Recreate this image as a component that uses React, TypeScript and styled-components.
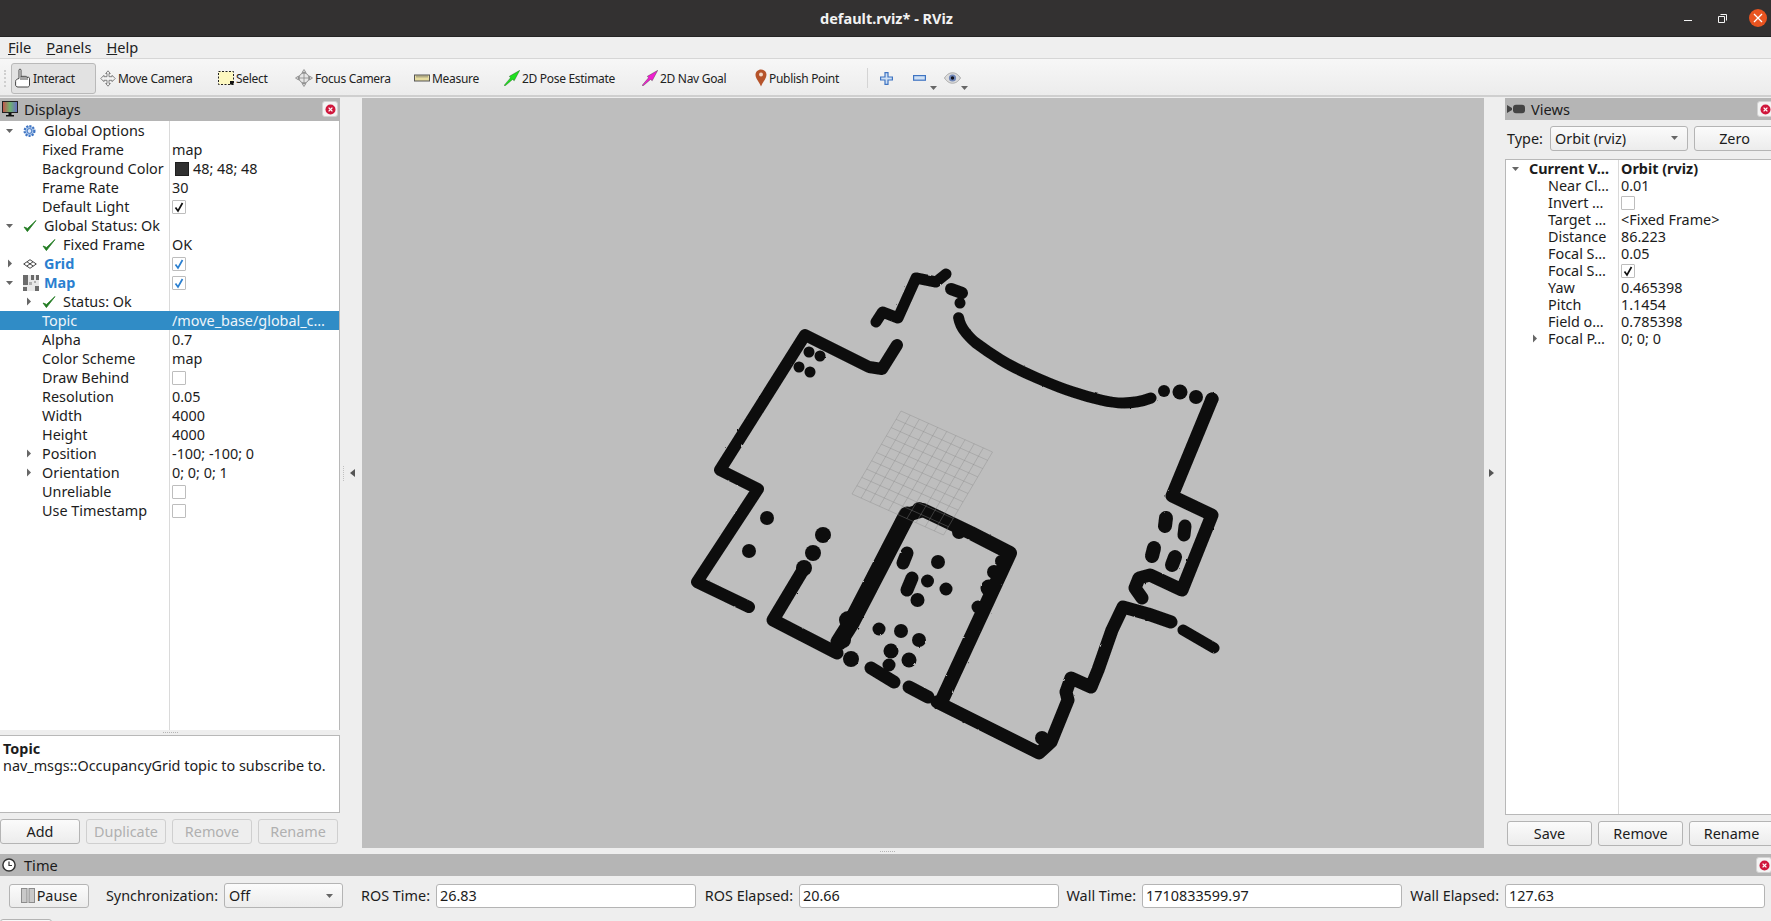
import React from "react";
import styled, { createGlobalStyle } from "styled-components";

const Global = createGlobalStyle`
  html, body { margin: 0; padding: 0; background: #eeeeee; overflow: hidden; }
  * { box-sizing: border-box; }
`;

const FONT = `"Noto Sans", "Open Sans", sans-serif`;

const Page = styled.div`
  width: 1771px; height: 921px; overflow: hidden; display: flex; flex-direction: column;
  font-family: ${FONT}; font-size: 14.4px; color: #1c1c1c; background: #eeeeee;
`;
const TitleBar = styled.div`
  flex: 0 0 37px; background: #333131; border-bottom: 1px solid #252424; position: relative;
  display: flex; align-items: center; justify-content: center; color: #f2f2f2; font-weight: 700; font-size: 14.5px; padding-left: 2px;
`;
const WindowControls = styled.div`
  position: absolute; top: 0; right: 4px; height: 36px; display: flex; align-items: center;
`;
const MenuBar = styled.div`
  flex: 0 0 22px; display: flex; gap: 15px; align-items: center; padding: 0 0 2px 8px; background: #efefef;
  border-bottom: 1px solid #d6d6d6; font-size: 14.6px; line-height: 18px; color: #222;
`;
const Toolbar = styled.div`
  flex: 0 0 38px; display: flex; align-items: center; padding: 2px 0 0 4px; font-size: 12px; letter-spacing: -.3px; color: #222;
  background: linear-gradient(#f7f7f7, #ececec); border-bottom: 2px solid #cfcfcf;
`;
const Grip = styled.div`
  width: 3px; height: 17px; margin-right: 4px; border-left: 2px dotted #cfcfcf;
`;
const ToolButton = styled.div<{ $w: number; $active?: boolean }>`
  flex: 0 0 ${p => p.$w}px; height: 31px; display: flex; align-items: center; gap: 2px; padding-left: 3px;
  border: 1px solid ${p => (p.$active ? "#b9b9b9" : "transparent")}; border-radius: 3px;
  background: ${p => (p.$active ? "#e2e2e2" : "transparent")};
`;
const ToolSep = styled.div`
  width: 1px; height: 20px; background: #d4d4d4; margin-right: 12px;
`;
const IconTool = styled.div<{ $w: number }>`
  position: relative; flex: 0 0 ${p => p.$w}px; height: 24px; display: flex; align-items: center;
`;
const Drop = styled.span`
  position: absolute; left: 17px; bottom: 0; line-height: 0;
`;
const Workspace = styled.div`
  flex: 0 0 757px; display: flex; padding-top: 1px; position: relative;
`;
const Dock = styled.div<{ $w: number }>`
  flex: 0 0 ${p => p.$w}px; display: flex; flex-direction: column; height: 100%;
`;
const DockHeader = styled.div<{ $h: number }>`
  flex: 0 0 ${p => p.$h}px; background: #b5b5b5; display: flex; align-items: center; gap: 6px; padding: 0 0 1px 2px;
  position: relative; font-size: 14.6px;
`;
const CloseBox = styled.div`
  position: absolute; right: 2px; top: 3px; width: 16px; height: 16px; background: #f4f4f4; border: 1px solid #d2d2d2; border-radius: 3px;
  display: flex; align-items: center; justify-content: center;
`;
const Tree = styled.div<{ $col: number; $h: number; $framed?: boolean }>`
  flex: 0 0 ${p => p.$h}px; border-right: 1px solid #b8b8b8; overflow: hidden;
  border-left: ${p => (p.$framed ? "1px solid #b8b8b8" : "none")};
  border-top: ${p => (p.$framed ? "1px solid #b8b8b8" : "none")};
  border-bottom: ${p => (p.$framed ? "1px solid #b8b8b8" : "none")};
  background: linear-gradient(#dadada, #dadada) ${p => p.$col}px 0 / 1px 100% no-repeat, #ffffff;
`;
const CompactRows = styled.div`
  margin-top: -1px;
`;
const Row = styled.div<{ $col: number; $h: number; $selected?: boolean }>`
  height: ${p => p.$h}px; display: grid; grid-template-columns: ${p => p.$col}px 1fr; align-items: center; white-space: nowrap;
  background: ${p => (p.$selected ? "#308cc6" : "transparent")}; color: ${p => (p.$selected ? "#eef5fa" : "inherit")};
`;
const NameCell = styled.div<{ $level: number }>`
  display: flex; align-items: center; height: 100%; padding-left: ${p => p.$level * 19}px; min-width: 0;
`;
const ArrowSlot = styled.span`
  flex: 0 0 19px; display: flex; align-items: center; justify-content: center;
`;
const IconSlot = styled.span`
  flex: 0 0 25px; display: flex; align-items: center; padding-left: 4px;
`;
const Label = styled.span<{ $bold?: boolean; $blue?: boolean; $plain?: boolean }>`
  font-weight: ${p => (p.$bold || p.$blue ? 700 : 400)};
  color: ${p => (p.$blue ? "#2a7fd0" : "inherit")};
  margin-left: ${p => (p.$plain ? 4 : 0)}px;
`;
const ValueCell = styled.div<{ $bold?: boolean }>`
  display: flex; align-items: center; gap: 4px; padding-left: 3px; height: 100%; font-weight: ${p => (p.$bold ? 700 : 400)};
  overflow: hidden;
`;
const Swatch = styled.span`
  width: 14px; height: 14px; margin-left: 3px; background: #303030; border: 1px solid #1f1f1f;
`;
const Check = styled.span`
  width: 14px; height: 14px; background: #fff; border: 1px solid #bdbdbd; border-radius: 1px; display: flex; align-items: center; justify-content: center;
`;
const SplitHandle = styled.div<{ $h: number }>`
  flex: 0 0 ${p => p.$h}px; display: flex; align-items: center; justify-content: center;
`;
const HDots = styled.span`
  width: 15px; border-top: 1px dotted #b5b5b5;
`;
const Description = styled.div`
  flex: 0 0 78px; background: #fff; border: 1px solid #b8b8b8; border-left: none; padding: 4px 3px; line-height: 17px;
`;
const DescTitle = styled.div`
  font-weight: 700;
`;
const ButtonRow = styled.div<{ $pl: number; $mt: number }>`
  display: flex; gap: 6px; padding-left: ${p => p.$pl}px; margin-top: ${p => p.$mt}px;
`;
const Button = styled.div<{ $w: number; $disabled?: boolean }>`
  flex: 0 0 ${p => p.$w}px; height: 25px; display: flex; align-items: center; justify-content: center;
  border: 1px solid ${p => (p.$disabled ? "#cfcfcf" : "#b4b4b4")}; border-radius: 3px;
  color: ${p => (p.$disabled ? "#b0b0b0" : "#1c1c1c")};
  background: ${p => (p.$disabled ? "#eeeeee" : "linear-gradient(#fbfbfb, #ececec)")};
`;
const Gutter = styled.div<{ $pl: number; $pr: number; $w: number }>`
  flex: 0 0 ${p => p.$w}px; position: relative; display: flex; align-items: center; justify-content: center;
  padding: 0 ${p => p.$pr}px 6px ${p => p.$pl}px;
`;
const VDots = styled.span`
  position: absolute; left: 3px; top: 368px; height: 15px; border-left: 1px dotted #c0c0c0;
`;
const ViewportCol = styled.div`
  flex: 0 0 1122px; display: flex; flex-direction: column; height: 100%;
`;
const Viewport = styled.div`
  flex: 0 0 750px; background: #bebebe; svg { display: block; }
`;
const BottomHandle = styled.div`
  flex: 1; display: flex; align-items: center; padding-left: 518px;
`;
const TypeRow = styled.div`
  flex: 0 0 39px; display: flex; align-items: center; padding: 0 0 3px 2px;
`;
const TypeLabel = styled.span`
  width: 43px;
`;
const Combo = styled.div<{ $w: number }>`
  flex: 0 0 ${p => p.$w}px; height: 25px; display: flex; align-items: center; justify-content: space-between; padding: 0 8px 0 4px;
  border: 1px solid #b4b4b4; border-radius: 3px; background: linear-gradient(#fbfbfb, #ececec);
`;
const ZeroButton = styled(Button)`
  margin-left: 6px;
`;
const TimeDock = styled.div`
  flex: 1; display: flex; flex-direction: column; position: relative;
`;
const TimeHeader = styled.div`
  flex: 0 0 22px; background: #b5b5b5; display: flex; align-items: center; gap: 8px; padding-left: 2px; position: relative; font-size: 14.6px;
`;
const TimeClose = styled(CloseBox)`
  right: -1px; top: 3px;
`;
const TimeBar = styled.div`
  display: grid; align-items: center; padding: 7px 0 0 9px; height: 31px;
  grid-template-columns: 80px 135px 119px 93px 260px 103px 260px 83px 260px 103px 260px;
`;
const TimeLabel = styled.span`
  text-align: right; padding-right: 6px; white-space: nowrap;
`;
const TimeInput = styled.div`
  height: 24px; border: 1px solid #b4b4b4; border-radius: 3px; background: #fff; display: flex; align-items: center; padding-left: 3px;
`;
const PauseButton = styled(Button)`
  gap: 2px; height: 24px;
`;
const ResetStub = styled.div`
  width: 52px; height: 10px; margin-top: 12px; border: 1px solid #b4b4b4; border-radius: 3px; background: #f8f8f8;
`;

/* ---------- icons ---------- */
const ArrowDown = () => (
  <svg width="9" height="6" viewBox="0 0 9 6"><path d="M1 1h7L4.500 5z" fill="#666" /></svg>
);
const ArrowRight = () => (
  <svg width="6" height="9" viewBox="0 0 6 9"><path d="M1 .5v8L5 4.500z" fill="#666" /></svg>
);
const CloseIcon = () => (
  <svg width="11" height="11" viewBox="0 0 11 11">
    <circle cx="5.500" cy="5.500" r="5" fill="#d0173c" />
    <path d="M3.600 3.600l3.800 3.800M7.400 3.600L3.600 7.400" stroke="#fff" strokeWidth="1.300" />
  </svg>
);
const CheckMark = ({ blue }: { blue?: boolean }) => (
  <svg width="12" height="12" viewBox="0 0 12 12"><path d="M2.500 6.500L5 10l4.500-8" fill="none" stroke={blue ? "#2a7fd0" : "#111"} strokeWidth="1.700" /></svg>
);
const GreenCheck = () => (
  <svg width="14" height="14" viewBox="0 0 14 14"><path d="M1 8l3.400 4.600L13 1.500 4.600 9.400z" fill="#1f7a1f" stroke="#1f7a1f" strokeWidth=".8" /></svg>
);
const GearIcon = () => (
  <svg width="13" height="14" viewBox="0 0 13 14">
    <circle cx="6.500" cy="7" r="4.900" fill="#aac6ea" stroke="#3f74c2" strokeWidth="2.200" strokeDasharray="2 1.200" />
    <circle cx="6.500" cy="7" r="2.400" fill="#dfeafa" stroke="#3f74c2" />
  </svg>
);
const GridIcon = () => (
  <svg width="14" height="10" viewBox="0 0 14 10">
    <path d="M7 .7L13.300 5 7 9.300.7 5zM4 2.800l6.200 4.300M10 2.800L3.800 7.100" fill="none" stroke="#444" strokeWidth="1" />
  </svg>
);
const MapIcon = () => (
  <svg width="16" height="16" viewBox="0 0 16 16">
    <rect width="16" height="16" fill="#e8e8e8" />
    <path d="M0 0h5v10H0zM8 0h3v5H8zM13 0h3v5h-3zM0 12h4v4H0zM12 11h4v5h-4z" fill="#6b6b6b" />
    <path d="M6 7h3v3H6zM11 6h2v2h-2z" fill="#b0b0b0" />
  </svg>
);
const MonitorIcon = () => (
  <svg width="16" height="16" viewBox="0 0 16 16">
    <defs>
      <linearGradient id="scr" x1="0" x2="1"><stop offset="0" stopColor="#c8504a" /><stop offset=".5" stopColor="#6fb36f" /><stop offset="1" stopColor="#6a6ac8" /></linearGradient>
    </defs>
    <rect x=".5" y=".5" width="15" height="11" fill="url(#scr)" stroke="#222" />
    <path d="M6.500 12h3v2h-3zM4 14h8v1.400H4z" fill="#111" />
  </svg>
);
const CameraIcon = () => (
  <svg width="18" height="10" viewBox="0 0 18 10">
    <path d="M0 1l5 3V6l-5 3z" fill="#444" />
    <rect x="6" y=".8" width="12" height="8.400" rx="3" fill="#444" />
  </svg>
);
const ClockIcon = () => (
  <svg width="14" height="14" viewBox="0 0 14 14">
    <circle cx="7" cy="7" r="6.100" fill="#fff" stroke="#333" strokeWidth="1.500" />
    <path d="M7 3.500V7.500H10" fill="none" stroke="#333" strokeWidth="1.200" />
  </svg>
);
const HandIcon = () => (
  <svg width="16" height="20" viewBox="0 0 16 20">
    <path d="M4 10.500V2.200c0-1.500 2-1.500 2 0V9c0-1.200 2-1.200 2 0 0-1.200 2-1.200 2 0 0-1 2-1 2 .3v.6c0-1 2.500-1 2.500.4V17c0 1-.6 2-2 2H3c-1.400 0-2.400-1-2.400-2v-3.600c0-1.600 1.400-2.400 3.400-2.900zM6 9v3M8 9v3M10 9v3M12 9.500V12" fill="#fff" stroke="#333" strokeWidth=".9" />
  </svg>
);
const MoveIcon = () => (
  <svg width="16" height="17" viewBox="0 0 16 17">
    <path d="M8 .8l2.300 2.700H9v3.200h3.100V5.300L15.200 8.500l-3.100 3.200V10.300H9v3.200h1.300L8 16.200l-2.300-2.700H7v-3.200H3.900v1.400L.8 8.500l3.100-3.200v1.400H7V3.500H5.700z" fill="#f2f2f2" stroke="#777" strokeWidth=".9" />
  </svg>
);
const SelectIcon = () => (
  <svg width="16" height="14" viewBox="0 0 16 14">
    <rect x=".5" y=".5" width="15" height="13" fill="#fdf8c0" stroke="#222" strokeDasharray="2 1.500" />
    <path d="M12 10h3.500v3.500H12z" fill="#111" />
  </svg>
);
const FocusIcon = () => (
  <svg width="18" height="18" viewBox="0 0 18 18">
    <circle cx="9" cy="9" r="5" fill="#e6e6e6" stroke="#888" />
    <path d="M9 .5l2 3H7zM9 17.500l2-3H7zM.5 9l3-2v4zM17.500 9l-3-2v4zM9 3v12M3 9h12" fill="#cfcfcf" stroke="#888" strokeWidth=".8" />
  </svg>
);
const RulerIcon = () => (
  <svg width="16" height="8" viewBox="0 0 16 8">
    <rect x=".5" y="1" width="15" height="6" fill="#e6dca0" stroke="#555" />
    <path d="M3 1.500v2M5 1.500v2M7 1.500v2M9 1.500v2M11 1.500v2M13 1.500v2" stroke="#555" strokeWidth=".7" />
  </svg>
);
const ArrowGoal = ({ color }: { color: string }) => (
  <svg width="16" height="16" viewBox="0 0 16 16">
    <path d="M0 15.400L6.500 7.800 5.300 6.300 15.800 .3l-5.600 10.500-1.600-1.400-7.400 6.400z" fill={color} stroke="#1a3a1a" strokeWidth=".35" />
  </svg>
);
const PinIcon = () => (
  <svg width="12" height="18" viewBox="0 0 12 18">
    <path d="M6 .5c3 0 5.500 2.300 5.500 5.300 0 3.700-3.700 7.200-5.500 11.700C4.200 13 .5 9.500.5 5.800.5 2.800 3 .5 6 .5z" fill="#b5532a" />
    <circle cx="6" cy="5.500" r="2" fill="#f2d9c8" />
  </svg>
);
const PlusIcon = () => (
  <svg width="13" height="13" viewBox="0 0 13 13">
    <path d="M5 .6h3V5h4.400v3H8v4.400H5V8H.6V5H5z" fill="#cfe0f4" stroke="#3f74c2" strokeWidth="1.200" />
  </svg>
);
const MinusIcon = () => (
  <svg width="13" height="6" viewBox="0 0 13 6">
    <rect x=".6" y=".6" width="11.800" height="4.600" fill="#cfe0f4" stroke="#3f74c2" strokeWidth="1.200" />
  </svg>
);
const EyeIcon = () => (
  <svg width="17" height="12" viewBox="0 0 17 12">
    <path d="M.5 6C3 2 6 .8 8.500.8S14 2 16.500 6c-2.500 4-5.500 5.200-8 5.200S3 10 .5 6z" fill="#dcdcdc" stroke="#a8a8a8" />
    <circle cx="8.500" cy="6" r="3.600" fill="#6f86b8" />
    <circle cx="8.500" cy="6" r="1.700" fill="#14141e" />
  </svg>
);
const TinyDrop = () => (
  <svg width="7" height="4" viewBox="0 0 7 4"><path d="M0 0h7L3.500 4z" fill="#666" /></svg>
);
const SideArrow = ({ dir }: { dir: "l" | "r" }) => (
  <svg width="5" height="8" viewBox="0 0 5 8"><path d={dir === "l" ? "M5 0v8L0 4z" : "M0 0v8l5-4z"} fill="#555" /></svg>
);
const PauseIcon = () => (
  <svg width="14" height="15" viewBox="0 0 14 15">
    <rect x=".5" y=".5" width="5.500" height="14" fill="#c9c9c9" stroke="#8c8c8c" />
    <rect x="8" y=".5" width="5.500" height="14" fill="#c9c9c9" stroke="#8c8c8c" />
  </svg>
);
const WinMin = styled.div`
  width: 8px; height: 1px; background: #f4f4f4; margin: 4px 26px 0 0;
`;
const WinClose = styled.div`
  width: 18px; height: 18px; border-radius: 50%; background: #e95420; display: flex; align-items: center; justify-content: center; margin-left: 22px;
`;

/* ---------- data ---------- */
type RowData = {
  name: string; level?: number; arrow?: "d" | "r"; icon?: React.ReactNode; blue?: boolean; bold?: boolean;
  value?: string; swatch?: boolean; check?: boolean | "blue"; unchecked?: boolean; selected?: boolean;
};
const displays: RowData[] = [
  { name: "Global Options", arrow: "d", icon: <GearIcon /> },
  { name: "Fixed Frame", level: 1, value: "map" },
  { name: "Background Color", level: 1, value: "48; 48; 48", swatch: true },
  { name: "Frame Rate", level: 1, value: "30" },
  { name: "Default Light", level: 1, check: true },
  { name: "Global Status: Ok", arrow: "d", icon: <GreenCheck /> },
  { name: "Fixed Frame", level: 1, icon: <GreenCheck />, value: "OK" },
  { name: "Grid", arrow: "r", icon: <GridIcon />, blue: true, check: "blue" },
  { name: "Map", arrow: "d", icon: <MapIcon />, blue: true, check: "blue" },
  { name: "Status: Ok", level: 1, arrow: "r", icon: <GreenCheck /> },
  { name: "Topic", level: 1, value: "/move_base/global_c…", selected: true },
  { name: "Alpha", level: 1, value: "0.7" },
  { name: "Color Scheme", level: 1, value: "map" },
  { name: "Draw Behind", level: 1, unchecked: true },
  { name: "Resolution", level: 1, value: "0.05" },
  { name: "Width", level: 1, value: "4000" },
  { name: "Height", level: 1, value: "4000" },
  { name: "Position", level: 1, arrow: "r", value: "-100; -100; 0" },
  { name: "Orientation", level: 1, arrow: "r", value: "0; 0; 0; 1" },
  { name: "Unreliable", level: 1, unchecked: true },
  { name: "Use Timestamp", level: 1, unchecked: true },
];
const views: RowData[] = [
  { name: "Current V…", arrow: "d", bold: true, value: "Orbit (rviz)" },
  { name: "Near Cl…", level: 1, value: "0.01" },
  { name: "Invert …", level: 1, unchecked: true },
  { name: "Target …", level: 1, value: "<Fixed Frame>" },
  { name: "Distance", level: 1, value: "86.223" },
  { name: "Focal S…", level: 1, value: "0.05" },
  { name: "Focal S…", level: 1, check: true },
  { name: "Yaw", level: 1, value: "0.465398" },
  { name: "Pitch", level: 1, value: "1.1454" },
  { name: "Field o…", level: 1, value: "0.785398" },
  { name: "Focal P…", level: 1, arrow: "r", value: "0; 0; 0" },
];

const TreeRows = ({ rows, col, h }: { rows: RowData[]; col: number; h: number }) => (
  <>
    {rows.map((r, i) => (
      <Row key={i} $col={col} $h={h} $selected={r.selected}>
        <NameCell $level={r.level ?? 0}>
          <ArrowSlot>{r.arrow === "d" ? <ArrowDown /> : r.arrow === "r" ? <ArrowRight /> : null}</ArrowSlot>
          {r.icon && <IconSlot>{r.icon}</IconSlot>}
          <Label $bold={r.bold} $blue={r.blue} $plain={!r.icon}>{r.name}</Label>
        </NameCell>
        <ValueCell $bold={r.bold}>
          {r.swatch && <Swatch />}
          {r.check && <Check><CheckMark blue={r.check === "blue"} /></Check>}
          {r.unchecked && <Check />}
          {r.value}
        </ValueCell>
      </Row>
    ))}
  </>
);

/* ---------- map drawing ---------- */
const walls: { w: number; pts: string }[] = [
  { w: 12, pts: "897,345 882,369 869,367 805,335 720,470 758,489 697,582 749,607" },
  { w: 11, pts: "876,322 882.500,312 898,318 916,278 936,282 946,274" },
  { w: 12, pts: "951,289 962,293" },
  { w: 13, pts: "1212,399 1172,496 1212,515 1182,590 1150,575 1139,578 1135,588 1142,598" },
  { w: 13, pts: "1171,622 1148,614 1123,607 1112,630 1098,670 1091,687 1071,678 1066,692 1068,700 1051,742 1039,753 937,702" },
  { w: 11, pts: "1183,630 1214,648" },
  { w: 14, pts: "942,700 1010,553 971,533 923,510 907,515" },
  { w: 17, pts: "907,515 851,623 839,642" },
  { w: 13, pts: "803,570 773,620 837,653" },
  { w: 13, pts: "871,668 894,682" },
  { w: 13, pts: "909,687 928,697" },
  { w: 13, pts: "907,553 903,563" },
  { w: 13, pts: "912,578 907,590" },
  { w: 14, pts: "1166,518 1165,526" },
  { w: 13, pts: "1185,526 1184,535" },
  { w: 14, pts: "1154,548 1152,556" },
  { w: 14, pts: "1175,557 1172,565" },
];
const CURVE = "M958.600 317.700Q960 326 966 333T976 343Q988 352 1001 360T1037 378T1073 392Q1088 397 1101 400T1123 403Q1138 403 1151 398";
const dots: [number, number, number][] = [
  [960, 303, 5.5], [1164, 391, 6], [1180, 392, 7.5], [1196, 397, 7], [1212, 399, 6.5],
  [809, 352, 5.5], [820, 356, 5.5], [799, 367, 5.5], [810, 372, 5.5],
  [851, 659, 8], [889, 665, 6.5], [823, 535, 8], [813, 553, 8], [804, 568, 8], [767, 518, 7], [749, 551, 7],
  [938, 562, 7], [927.5, 581, 6.5], [946, 589, 6.5], [917.5, 600, 7], [879, 629, 6.5], [901, 631, 7], [919, 640, 7],
  [891, 651, 7.5], [909, 660, 7.5], [1001, 561, 6], [994, 572, 7], [989, 588, 8.5], [978, 607, 6.5], [959, 532, 7], [843, 640, 8], [848, 620, 9],
  [1042, 738, 7], [919, 509, 7],
];
const gridLines = (() => {
  const t = [901, 411], r = [992.5, 452], l = [852, 494];
  const out: string[] = [];
  for (let i = 0; i <= 10; i++) {
    const f = i / 10;
    const ux = (r[0] - t[0]) * f, uy = (r[1] - t[1]) * f;
    const vx = (l[0] - t[0]) * f, vy = (l[1] - t[1]) * f;
    out.push(`M${t[0] + ux} ${t[1] + uy}L${l[0] + ux} ${l[1] + uy}`);
    out.push(`M${t[0] + vx} ${t[1] + vy}L${r[0] + vx} ${r[1] + vy}`);
  }
  return out.join("");
})();
const MapDrawing = () => (
  <svg width="1122" height="750" viewBox="362 98 1122 750">
    <defs>
      <filter id="rough" filterUnits="userSpaceOnUse" x="362" y="98" width="1122" height="750">
        <feTurbulence type="fractalNoise" baseFrequency="0.18" numOctaves="2" seed="4" result="n" />
        <feDisplacementMap in="SourceGraphic" in2="n" scale="1.8" />
      </filter>
    </defs>
    <g filter="url(#rough)">
      <g fill="none" stroke="#0f0f0f" strokeLinecap="round" strokeLinejoin="round">
        {walls.map((w, i) => <polyline key={i} points={w.pts} strokeWidth={w.w} />)}
        <path d={CURVE} strokeWidth="11" />
      </g>
      {dots.map(([x, y, r], i) => <circle key={i} cx={x} cy={y} r={r} fill="#0f0f0f" />)}
    </g>
    <path d={gridLines} fill="none" stroke="#8a8a8a" strokeOpacity=".38" strokeWidth="1" />
  </svg>
);

export default function App() {
  return (
    <Page>
      <Global />
      <TitleBar>
        default.rviz* - RViz
        <WindowControls>
          <WinMin />
          <svg width="9" height="9" viewBox="0 0 9 9"><path d="M2.500.5h6v6M.5 2.500h6v6h-6z" fill="none" stroke="#f4f4f4" /></svg>
          <WinClose>
            <svg width="10" height="10" viewBox="0 0 10 10"><path d="M1 1l8 8M9 1L1 9" stroke="#fff" strokeWidth="1.300" /></svg>
          </WinClose>
        </WindowControls>
      </TitleBar>
      <MenuBar>
        <span><u>F</u>ile</span>
        <span><u>P</u>anels</span>
        <span><u>H</u>elp</span>
      </MenuBar>
      <Toolbar>
        <Grip />
        <ToolButton $w={85} $active><HandIcon />Interact</ToolButton>
        <ToolButton $w={118}><MoveIcon />Move Camera</ToolButton>
        <ToolButton $w={77}><SelectIcon />Select</ToolButton>
        <ToolButton $w={119}><FocusIcon />Focus Camera</ToolButton>
        <ToolButton $w={90}><RulerIcon />Measure</ToolButton>
        <ToolButton $w={138}><ArrowGoal color="#1fe01f" />2D Pose Estimate</ToolButton>
        <ToolButton $w={113}><ArrowGoal color="#f01fd0" />2D Nav Goal</ToolButton>
        <ToolButton $w={116}><PinIcon />Publish Point</ToolButton>
        <ToolSep />
        <IconTool $w={33}><PlusIcon /></IconTool>
        <IconTool $w={31}><MinusIcon /><Drop><TinyDrop /></Drop></IconTool>
        <IconTool $w={30}><EyeIcon /><Drop><TinyDrop /></Drop></IconTool>
      </Toolbar>
      <Workspace>
        <Dock $w={340}>
          <DockHeader $h={23}>
            <MonitorIcon />Displays
            <CloseBox><CloseIcon /></CloseBox>
          </DockHeader>
          <Tree $col={169} $h={609}>
            <TreeRows rows={displays} col={169} h={19} />
          </Tree>
          <SplitHandle $h={5}><HDots /></SplitHandle>
          <Description>
            <DescTitle>Topic</DescTitle>
            nav_msgs::OccupancyGrid topic to subscribe to.
          </Description>
          <ButtonRow $pl={0} $mt={6}>
            <Button $w={80}>Add</Button>
            <Button $w={80} $disabled>Duplicate</Button>
            <Button $w={80} $disabled>Remove</Button>
            <Button $w={80} $disabled>Rename</Button>
          </ButtonRow>
        </Dock>
        <Gutter $w={22} $pl={3} $pr={0}><VDots /><SideArrow dir="l" /></Gutter>
        <ViewportCol>
          <Viewport><MapDrawing /></Viewport>
          <BottomHandle><HDots /></BottomHandle>
        </ViewportCol>
        <Gutter $w={21} $pl={0} $pr={6}><SideArrow dir="r" /></Gutter>
        <Dock $w={270}>
          <DockHeader $h={22}>
            <CameraIcon />Views
            <CloseBox><CloseIcon /></CloseBox>
          </DockHeader>
          <TypeRow>
            <TypeLabel>Type:</TypeLabel>
            <Combo $w={138}>Orbit (rviz)<ArrowDown /></Combo>
            <ZeroButton $w={81}>Zero</ZeroButton>
          </TypeRow>
          <Tree $col={112} $h={656} $framed>
            <CompactRows>
              <TreeRows rows={views} col={112} h={17} />
            </CompactRows>
          </Tree>
          <ButtonRow $pl={2} $mt={6}>
            <Button $w={85}>Save</Button>
            <Button $w={85}>Remove</Button>
            <Button $w={85}>Rename</Button>
          </ButtonRow>
        </Dock>
      </Workspace>
      <TimeDock>
        <TimeHeader>
          <ClockIcon />Time
          <TimeClose><CloseIcon /></TimeClose>
        </TimeHeader>
        <TimeBar>
          <PauseButton $w={80}><PauseIcon />Pause</PauseButton>
          <TimeLabel>Synchronization:</TimeLabel>
          <Combo $w={119}>Off<ArrowDown /></Combo>
          <TimeLabel>ROS Time:</TimeLabel>
          <TimeInput>26.83</TimeInput>
          <TimeLabel>ROS Elapsed:</TimeLabel>
          <TimeInput>20.66</TimeInput>
          <TimeLabel>Wall Time:</TimeLabel>
          <TimeInput>1710833599.97</TimeInput>
          <TimeLabel>Wall Elapsed:</TimeLabel>
          <TimeInput>127.63</TimeInput>
        </TimeBar>
        <ResetStub />
      </TimeDock>
    </Page>
  );
}
